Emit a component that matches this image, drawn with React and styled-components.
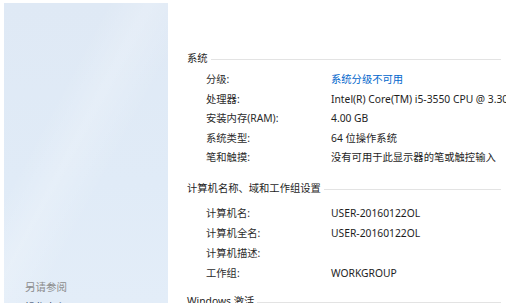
import React from 'react';
import styled, { createGlobalStyle } from 'styled-components';

const GlobalStyle = createGlobalStyle`
  html, body {
    margin: 0;
    padding: 0;
    background: #ffffff;
    overflow: hidden;
  }
  body {
    font-family: "Noto Sans", "Noto Sans CJK SC", sans-serif;
    font-size: 10.3px;
    color: #1e1e1e;
  }
`;

const Window = styled.div`
  display: flex;
  width: 506px;
  height: 303px;
  overflow: hidden;
`;

const Sidebar = styled.aside`
  flex: 0 0 164px;
  margin: 3px 0 0 4px;
  background: linear-gradient(
      118deg,
      rgba(255, 255, 255, 0) 32%,
      rgba(255, 255, 255, 0.2) 45%,
      rgba(255, 255, 255, 0) 60%
    ),
    linear-gradient(180deg, #dfe9f5 0%, #e0ebf7 60%, #e3edf8 100%);
  display: flex;
  flex-direction: column;
  justify-content: flex-end;
  padding: 0 0 0 21px;
  box-sizing: border-box;
`;

const SideTitle = styled.div`
  color: #8c8c8c;
  line-height: 20px;
  font-size: 10.5px;
`;

const SideLink = styled.div`
  color: #1e395b;
  line-height: 20px;
  margin-bottom: -14px;
`;

const Main = styled.main`
  flex: 1;
  padding: 48px 5px 0 19px;
  min-width: 0;
`;

const Section = styled.section`
  margin-top: ${(p) => p.$top || 0}px;
`;

const SectionHead = styled.div`
  display: flex;
  align-items: center;
  line-height: 20px;
  white-space: nowrap;
  margin-bottom: ${(p) => p.$gap || 0}px;

  &::after {
    content: '';
    flex: 1;
    height: 1px;
    background: #e3e3e3;
    margin-left: 3px;
    margin-top: 2px;
  }
`;

const Row = styled.div`
  display: flex;
  height: ${(p) => p.$h}px;
  line-height: ${(p) => p.$h}px;
  padding-left: 19px;
  white-space: nowrap;
`;

const Label = styled.div`
  flex: 0 0 125px;
  color: #2b2b2b;
`;

const Value = styled.div`
  color: ${(p) => (p.$link ? '#0066cc' : '#1e1e1e')};
  overflow: visible;
`;

const system = [
  ['分级:', '系统分级不可用', true],
  ['处理器:', 'Intel(R) Core(TM) i5-3550 CPU @ 3.30GHz   3.30 GHz'],
  ['安装内存(RAM):', '4.00 GB'],
  ['系统类型:', '64 位操作系统'],
  ['笔和触摸:', '没有可用于此显示器的笔或触控输入'],
];

const computer = [
  ['计算机名:', 'USER-20160122OL'],
  ['计算机全名:', 'USER-20160122OL'],
  ['计算机描述:', ''],
  ['工作组:', 'WORKGROUP'],
];

export default function App() {
  return (
    <Window>
      <GlobalStyle />
      <Sidebar>
        <SideTitle>另请参阅</SideTitle>
        <SideLink>操作中心</SideLink>
      </Sidebar>
      <Main>
        <Section>
          <SectionHead $gap={2}>系统</SectionHead>
          {system.map(([l, v, link]) => (
            <Row key={l} $h={19.5}>
              <Label>{l}</Label>
              <Value $link={link}>{v}</Value>
            </Row>
          ))}
        </Section>
        <Section $top={10.5}>
          <SectionHead $gap={5}>计算机名称、域和工作组设置</SectionHead>
          {computer.map(([l, v]) => (
            <Row key={l} $h={20}>
              <Label>{l}</Label>
              <Value>{v}</Value>
            </Row>
          ))}
        </Section>
        <Section $top={8}>
          <SectionHead>Windows 激活</SectionHead>
        </Section>
      </Main>
    </Window>
  );
}
